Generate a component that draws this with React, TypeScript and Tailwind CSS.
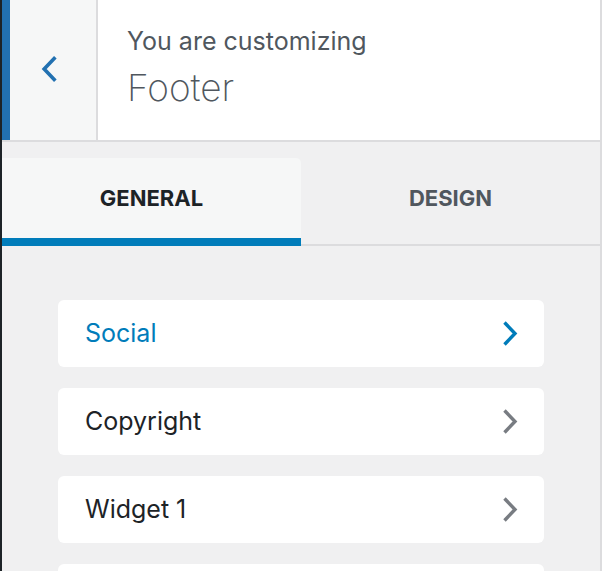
import { useState } from "react";

type Section = {
  label: string;
  active?: boolean;
};

const sections: Section[] = [
  { label: "Social", active: true },
  { label: "Copyright" },
  { label: "Widget 1" },
];

function Chevron({ dir, className }: { dir: "left" | "right"; className?: string }) {
  return (
    <svg viewBox="0 0 16 26" fill="none" className={className}>
      <polyline
        points={dir === "left" ? "13.5,2 3,13 13.5,24" : "2.5,2 13,13 2.5,24"}
        stroke="currentColor"
        strokeWidth="3.4"
        strokeLinecap="butt"
        strokeLinejoin="miter"
      />
    </svg>
  );
}

export default function App() {
  const [tab, setTab] = useState<"general" | "design">("general");

  return (
    <div
      className="w-[602px] h-[571px] overflow-hidden flex flex-col bg-[#f0f0f1] border-l-2 border-l-[#1d2327] border-r-2 border-r-[#dcdcde]"
      style={{ fontFamily: "Inter, 'Noto Sans', sans-serif" }}
    >
      {/* header */}
      <div className="h-[142px] shrink-0 flex bg-white border-b-2 border-[#dcdcde]">
        <button className="w-[96px] flex items-center justify-center bg-[#f6f7f7] border-l-8 border-l-[#2271b1] border-r-2 border-r-[#dcdcde] text-[#2271b1]">
          <Chevron dir="left" className="-ml-[8px] -mt-[2px] w-[17px] h-[28px]" />
        </button>
        <div className="flex flex-col pl-[29px] pt-[25px]">
          <span className="text-[25px] leading-[32px] text-[#50575e]">You are customizing</span>
          <span className="text-[37px] leading-[44px] font-extralight text-[#50575e] mt-[9px]">Footer</span>
        </div>
      </div>

      {/* tabs */}
      <div className="shrink-0 flex items-end pt-[16px] border-b-2 border-[#dcdcde]">
        <button
          onClick={() => setTab("general")}
          className={
            tab === "general"
              ? "flex-1 h-[88px] -mb-[2px] bg-[#f6f7f7] rounded-tr-[5px] border-b-8 border-[#007cba] text-[22px] font-bold text-[#1d2327]"
              : "flex-1 h-[88px] -mb-[2px] pb-[8px] text-[22px] font-bold text-[#50575e]"
          }
        >
          GENERAL
        </button>
        <button
          onClick={() => setTab("design")}
          className={
            tab === "design"
              ? "flex-1 h-[88px] -mb-[2px] bg-[#f6f7f7] rounded-tl-[5px] border-b-8 border-[#007cba] text-[22px] font-bold text-[#1d2327]"
              : "flex-1 h-[88px] -mb-[2px] pb-[8px] text-[22px] font-bold text-[#50575e]"
          }
        >
          DESIGN
        </button>
      </div>

      {/* sections */}
      <div className="flex flex-col gap-[21px] pt-[54px] pl-[56px] w-[542px]">
        {sections.map((s) => (
          <div
            key={s.label}
            className="h-[67px] shrink-0 flex items-center justify-between bg-white rounded-[6px] pl-[27px] pr-[26px]"
          >
            <span className={s.active ? "text-[25px] text-[#007cba]" : "text-[25px] text-[#1d2327]"}>
              {s.label}
            </span>
            <Chevron
              dir="right"
              className={s.active ? "w-[16px] h-[27px] text-[#007cba]" : "w-[16px] h-[27px] text-[#787c82]"}
            />
          </div>
        ))}
        <div className="h-[67px] shrink-0 bg-white rounded-[6px]" />
      </div>
    </div>
  );
}
